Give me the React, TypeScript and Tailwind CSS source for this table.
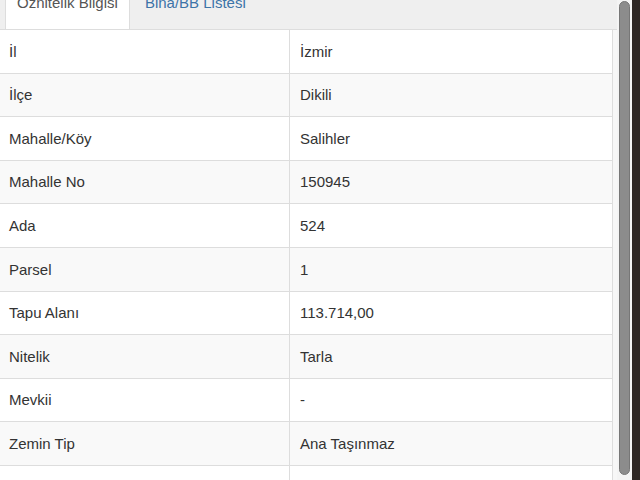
import React from "react";

const rows: [string, string][] = [
  ["İl", "İzmir"],
  ["İlçe", "Dikili"],
  ["Mahalle/Köy", "Salihler"],
  ["Mahalle No", "150945"],
  ["Ada", "524"],
  ["Parsel", "1"],
  ["Tapu Alanı", "113.714,00"],
  ["Nitelik", "Tarla"],
  ["Mevkii", "-"],
  ["Zemin Tip", "Ana Taşınmaz"],
];

export default function App() {
  return (
    <div
      className="flex h-[480px] w-[640px] overflow-hidden bg-[#2a2522] text-[15px] text-[#333]"
      style={{ fontFamily: '"Liberation Sans", Arial, sans-serif' }}
    >
      <div className="flex w-[617px] flex-col bg-[#f7f7f7]">
        {/* tabs */}
        <div className="flex h-[30px] shrink-0 items-end overflow-hidden border-b border-[#dddddd] bg-[#efefef] pl-[5px]">
          <div className="border-x border-[#dddddd] bg-white px-[11px] pb-[16px] leading-[20px] text-[#555]">
            Öznitelik Bilgisi
          </div>
          <div className="ml-[4px] px-[11px] pb-[16px] leading-[20px] text-[#3d74a8]">
            Bina/BB Listesi
          </div>
        </div>

        {/* table */}
        <div className="w-[613px] border-r border-[#dddddd]">
          {rows.map(([k, v], i) => (
            <div
              key={k}
              className={
                "flex h-[43.6px] border-b border-[#dddddd] " +
                (i % 2 === 1 ? "bg-[#f9f9f9]" : "bg-white")
              }
            >
              <div className="flex w-[290px] items-center border-r border-[#dddddd] pl-[9px] pt-[1px]">{k}</div>
              <div className="flex flex-1 items-center pl-[10px] pt-[1px]">{v}</div>
            </div>
          ))}
          <div className="flex h-[43.6px] bg-white text-[#e2e2e2]">
            <div className="flex w-[290px] items-center border-r border-[#dddddd] pl-[9px]">Pafta</div>
            <div className="flex flex-1 items-center pl-[10px]">L17-A-23-B</div>
          </div>
        </div>
      </div>

      {/* scrollbar */}
      <div className="flex w-[15px] justify-center bg-[#f4f4f4] pt-[1px] pb-[5px]">
        <div className="w-[11px] rounded-full border border-[#777] bg-[#8c8c8c]" />
      </div>
      <div className="flex-1 bg-[#2e2724]" />
    </div>
  );
}
